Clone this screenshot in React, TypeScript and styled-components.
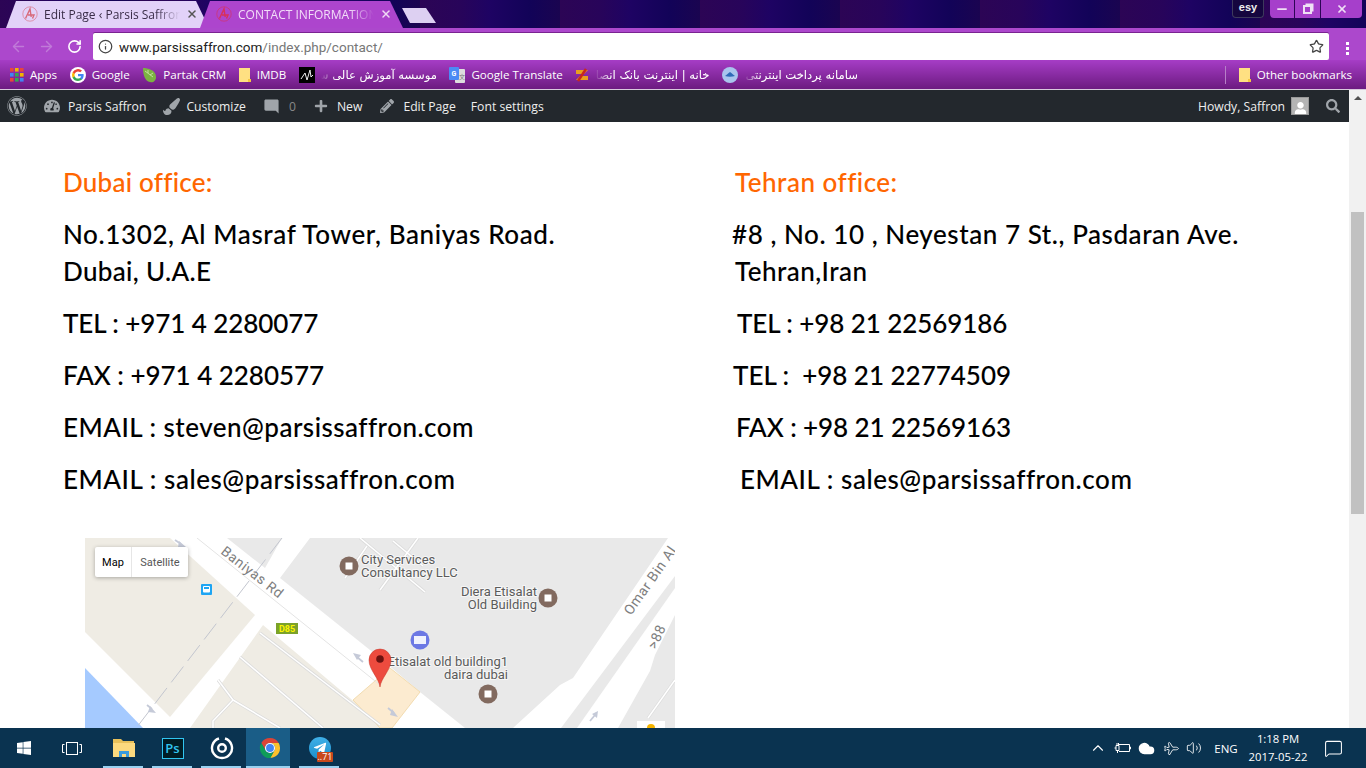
import React from "react";
import styled, { createGlobalStyle } from "styled-components";
import { FaWordpress, FaTachometerAlt, FaPaintBrush, FaPlus, FaPencilAlt, FaSearch, FaWindows, FaTelegramPlane, FaUser } from "react-icons/fa";
import { MdModeComment } from "react-icons/md";
import { ArrowLeft, ArrowRight, RotateCw, Info, Star, X, Minus, ChevronUp, Plane, Volume2, MessageSquare, Cloud } from "lucide-react";

const Global = createGlobalStyle`
  html, body { margin: 0; padding: 0; overflow: hidden; background: #fff; }
  * { box-sizing: border-box; }
`;

const Screen = styled.div`
  width: 1366px; height: 768px; display: flex; flex-direction: column; overflow: hidden;
  font-family: "Open Sans", "Liberation Sans", sans-serif;
`;
const TabStrip = styled.div`
  height: 28px; flex: none; display: flex; align-items: flex-end; padding-left: 6px;
  background: repeating-linear-gradient(90deg, #2c0555 0, #28045a 40px, #1e0363 70px, #120358 110px, #1a0450 140px);
`;
const Tab = styled.div<{ $active?: boolean }>`
  width: 203px; height: 28px; margin-right: -9px; padding: 0 11px 0 16px; display: flex; align-items: center; gap: 6px;
  clip-path: polygon(0 100%, 10px 1px, 190px 1px, 100% 100%);
  background: ${p => (p.$active ? "#ad45cd" : "#e2d2f8")};
  color: ${p => (p.$active ? "#f2dcf8" : "#3a2d48")};
  font-size: 12px;
`;
const TabTitle = styled.span`
  flex: 1; white-space: nowrap; overflow: hidden;
  -webkit-mask-image: linear-gradient(90deg, #000 82%, transparent);
`;
const NewTab = styled.div`
  width: 34px; height: 15px; margin: 0 0 5px 8px; background: #ddd0f2;
  clip-path: polygon(0 0, 24px 0, 100% 100%, 8px 100%);
`;
const Spacer = styled.div`flex: 1;`;
const Esy = styled.div`
  width: 32px; height: 18px; margin: 0 6px 10px 0; border: 1px solid #3d3a5c; border-top: 0; border-radius: 0 0 4px 4px;
  color: #eee; font: bold 11px "Liberation Sans", sans-serif; text-align: center; line-height: 15px; background: #15063f;
`;
const WinButtons = styled.div`
  display: flex; height: 18px; margin: 0 4px 10px 0; border-radius: 0 0 4px 4px; overflow: hidden; gap: 1px; background: #2c0555;
`;
const WinButton = styled.div<{ $w: number }>`
  width: ${p => p.$w}px; background: #a63fcb; color: #efe0f5; display: flex; align-items: center; justify-content: center;
`;
const RestoreGlyph = styled.div`
  width: 9px; height: 9px; border: 2px solid #efe0f5; box-shadow: 2px -2px 0 -0.5px #efe0f5;
`;
const Toolbar = styled.div`
  height: 32px; flex: none; padding: 5px 0 0 4px; display: flex; align-items: flex-start;
  background: #ac48cc;
`;
const NavIcon = styled.div<{ $on?: boolean }>`
  width: 28px; height: 27px; display: flex; align-items: center; justify-content: center;
  color: ${p => (p.$on ? "#fff" : "#c07ad8")};
`;
const Omnibox = styled.div`
  width: 1236px; height: 27px; margin-left: 5px; padding: 0 5px 0 5px; display: flex; align-items: center; gap: 6px;
  background: #fff; border-radius: 2px; box-shadow: 0 -1px 0 #7a2391; font: 13.500px "Roboto", sans-serif; color: #777;
`;
const UrlHost = styled.span`color: #222;`;
const Dots = styled.div`
  width: 3px; height: 3px; margin: 9px 0 0 17px; background: #fff; box-shadow: 0 5px #fff, 0 10px #fff;
`;
const Bookmarks = styled.div`
  height: 30px; flex: none; padding: 0 14px 0 10px; display: flex; align-items: center; gap: 12.600px;
  background: linear-gradient(#a63dc6, #6c1a80); border-bottom: 1px solid #d9c8de;
  color: #fff; font-size: 11.600px;
`;
const Mark = styled.div`display: flex; align-items: center; gap: 6px; white-space: nowrap;`;
const FadeText = styled.span<{ $w: number }>`
  width: ${p => p.$w}px; overflow: hidden; direction: rtl; font-family: "DejaVu Sans", sans-serif; font-size: 11.600px;
  -webkit-mask-image: linear-gradient(90deg, transparent, #000 16px);
`;
const Divider = styled.div`width: 1px; height: 18px; background: #b77fc8;`;
const Middle = styled.div`flex: 1; display: flex; min-height: 0;`;
const PageColumn = styled.div`flex: 1; display: flex; flex-direction: column; min-width: 0;`;
const AdminBar = styled.div`
  height: 32px; flex: none; padding: 0 9px 0 7px; display: flex; align-items: center; background: #23282d;
  color: #eee; font-size: 12.200px;
`;
const AdminItem = styled.div<{ $after?: number; $gap?: number }>`
  display: flex; align-items: center; gap: ${p => p.$gap ?? 8}px; margin-right: ${p => p.$after ?? 17}px; white-space: nowrap;
  svg { color: #a0a5aa; }
`;
const Muted = styled.span`color: #888; margin-left: 1px;`;
const Avatar = styled.div`
  width: 18px; height: 18px; background: #b4b4b4; border: 1px solid #999; margin: 0 17px 0 6px; display: flex; align-items: flex-end; justify-content: center; overflow: hidden;
  svg { color: #fff; margin-bottom: -1px; }
`;
const Content = styled.main`
  flex: 1; overflow: hidden; padding: 42px 0 0 63px; background: #fff;
`;
const Columns = styled.div`display: grid; grid-template-columns: 669px 1fr;`;
const Block = styled.div`margin: 0 0 15px;`;
const Line = styled.div<{ $indent?: number; $ls?: number; $orange?: boolean }>`
  margin-left: ${p => p.$indent ?? 0}px; font: 500 26px/37px "Lato", "Liberation Sans", sans-serif;
  letter-spacing: ${p => p.$ls ?? 0.42}px; color: ${p => (p.$orange ? "#ff6600" : "#000")}; white-space: pre;
  -webkit-text-stroke: 0.08px currentColor;
`;
const MapBox = styled.div`
  position: relative; width: 590px; height: 190px; margin: 25px 0 0 22px; overflow: hidden; background: #fff;
`;
const MapSvg = styled.svg`display: block;`;
const MapControl = styled.div`
  position: absolute; left: 10px; top: 9px; height: 30px; display: flex; background: #fff; border-radius: 2px;
  box-shadow: 0 1px 4px rgba(0,0,0,.3); font: 11px "Roboto", sans-serif; color: #565656;
`;
const MapTab = styled.div<{ $on?: boolean; $w: number }>`
  width: ${p => p.$w}px; display: flex; align-items: center; justify-content: center; color: ${p => (p.$on ? "#000" : "#565656")};
  border-right: ${p => (p.$on ? "1px solid #e6e6e6" : "none")};
`;
const Scrollbar = styled.div`
  width: 17px; flex: none; background: #f1f1f1; display: flex; flex-direction: column; align-items: center;
`;
const ScrollUp = styled.div`
  width: 0; height: 0; margin-top: 6px; border: 4px solid transparent; border-top: 0; border-bottom: 4px solid #505050;
`;
const ScrollThumb = styled.div`
  width: 13px; height: 302px; margin-top: 112px; background: #c1c1c1;
`;
const Taskbar = styled.footer`
  height: 40px; flex: none; display: flex; align-items: center; background: #0a3350; color: #fff;
`;
const Start = styled.div`width: 48px; display: flex; justify-content: center;`;
const TaskView = styled.div`width: 48px; display: flex; justify-content: center; margin-right: 3px;`;
const AppTile = styled.div<{ $active?: boolean }>`
  position: relative; width: ${p => (p.$active ? 44 : 49)}px; height: 40px; display: flex; align-items: center; justify-content: center;
  margin-right: ${p => (p.$active ? 5 : 0)}px; padding-left: ${p => (p.$active ? 4 : 0)}px;
  background: ${p => (p.$active ? "#1a5d87" : "transparent")};
  &::after { content: ""; position: absolute; left: ${p => (p.$active ? 0 : 4)}px; right: ${p => (p.$active ? 0 : 5)}px; bottom: 0; height: 2px; background: #99d1f0; }
`;
const PsIcon = styled.div`
  width: 22px; height: 21px; background: #001d26; border: 1px solid #31c5f0; color: #31c5f0;
  font: 600 13px/19px "Open Sans", sans-serif; text-align: center;
`;
const TgCircle = styled.div`
  width: 22px; height: 22px; border-radius: 50%; background: linear-gradient(#3fb0e8, #1d8fcb); display: flex; align-items: center; justify-content: center; color: #fff;
`;
const Badge = styled.span`
  position: absolute; left: 22px; top: 24px; width: 16px; height: 10px; background: #c8481b; color: #fff;
  font: 9px/10px "Open Sans", sans-serif; text-align: center; border-radius: 1px;
`;
const Tray = styled.div`
  margin-left: auto; display: flex; align-items: center; height: 100%; font-size: 11.300px;
`;
const TrayIcon = styled.div`width: 24px; display: flex; justify-content: center;`;
const TrayPlane = styled(TrayIcon)`svg { transform: rotate(45deg); }`;
const Lang = styled.div`width: 38px; margin-left: 1px; text-align: center; font-size: 11.500px;`;
const Clock = styled.div`width: 66px; text-align: center; line-height: 18px;`;
const Notify = styled.div`width: 44px; margin-right: 11px; display: flex; justify-content: center;`;

const FavIcon = ({ color }: { color: string }) => (
  <svg width="16" height="16" viewBox="0 0 16 16" fill="none" stroke={color} strokeWidth="1.4">
    <circle cx="8" cy="8" r="7.2" strokeWidth=".6" />
    <path d="M3.5 12.5 8 3l1.2 8M6 9h6l-1.5 3.5" />
  </svg>
);
const GoogleG = () => (
  <svg width="16" height="16" viewBox="0 0 24 24">
    <circle cx="12" cy="12" r="12" fill="#fff" />
    <path fill="#4285f4" d="M20.5 12.2c0-.6-.1-1.200-.2-1.700H12v3.300h4.800a4.100 4.100 0 0 1-1.800 2.700v2.200h2.900c1.700-1.600 2.600-3.800 2.600-6.500z" />
    <path fill="#34a853" d="M12 21c2.400 0 4.400-.8 5.900-2.200L15 16.500c-.8.500-1.800.9-3 .9-2.300 0-4.300-1.600-5-3.700H4v2.300A9 9 0 0 0 12 21z" />
    <path fill="#fbbc05" d="M7 13.700a5.400 5.400 0 0 1 0-3.400V8H4a9 9 0 0 0 0 8z" />
    <path fill="#ea4335" d="M12 6.600c1.300 0 2.500.5 3.400 1.300L18 5.400A9 9 0 0 0 4 8l3 2.300c.7-2.100 2.700-3.700 5-3.700z" />
  </svg>
);
const AppsGrid = () => (
  <svg width="14" height="14" viewBox="0 0 14 14">
    {["#e8453c","#f4b400","#e8453c","#4285f4","#34a853","#f4b400","#e8453c","#34a853","#4285f4"].map((c, i) => (
      <rect key={i} x={(i % 3) * 5} y={Math.floor(i / 3) * 5} width="3.600" height="3.600" fill={c} />
    ))}
  </svg>
);
const Leaf = () => (
  <svg width="15" height="16" viewBox="0 0 15 16">
    <path d="M1 1c5 0 13 2 13 9 0 4-3 6-6 5C3 14 1 8 1 1z" fill="#7cb342" />
    <path d="M3 4l8 6M6 6V3M8 8l3-2" stroke="#d5e8b5" strokeWidth=".8" fill="none" />
  </svg>
);
const Folder = () => (
  <svg width="12" height="14" viewBox="0 0 12 14">
    <path d="M0 0h11v11l1 0v3H0z" fill="#ffe082" />
    <path d="M9 11h3v3H9z" fill="#f5c542" />
  </svg>
);
const BlackMark = () => (
  <svg width="16" height="16" viewBox="0 0 16 16">
    <rect width="16" height="16" fill="#000" />
    <path d="M2 12 6 6l2 7 3-10 1 7 2-2" stroke="#eee" strokeWidth="1" fill="none" />
  </svg>
);
const Translate = () => (
  <svg width="16" height="16" viewBox="0 0 16 16">
    <rect x="6" y="2" width="10" height="14" rx="1" fill="#ddd" />
    <rect width="10" height="13" rx="1" fill="#4b8bf5" />
    <text x="2.500" y="9" fontSize="7" fontWeight="700" fill="#fff" fontFamily="Roboto, sans-serif">G</text>
    <text x="10" y="12" fontSize="6" fill="#777" fontFamily="Noto Sans CJK SC, sans-serif">文</text>
  </svg>
);
const BankMark = () => (
  <svg width="14" height="14" viewBox="0 0 14 14">
    <path d="M1 2h12L9 6H1z" fill="#e8a020" />
    <path d="M13 8H5l-4 4h12z" fill="#e8a020" />
    <path d="M3 13 11 1" stroke="#c8281e" strokeWidth="2.500" />
  </svg>
);
const Globe = () => (
  <svg width="16" height="16" viewBox="0 0 16 16">
    <circle cx="8" cy="8" r="8" fill="#a9c4ee" />
    <path d="M3 9c2-1 3-3 5-4 2 1 3 3 5 4-3 1-7 1-10 0z" fill="#2e6ab8" />
  </svg>
);
const ChromeLogo = () => (
  <svg width="22" height="22" viewBox="0 0 24 24">
    <path fill="#db4437" d="M12 1a11 11 0 0 0-9.500 5.500l4.300 7.400A5.500 5.500 0 0 1 12 6.500h9.500A11 11 0 0 0 12 1z" />
    <path fill="#fbc02d" d="M21.500 6.500H12a5.500 5.500 0 0 1 4.800 8.250L12.300 23A11 11 0 0 0 21.500 6.500z" />
    <path fill="#0f9d58" d="M2.500 6.500A11 11 0 0 0 12.300 23l4.500-8.250A5.500 5.500 0 0 1 6.800 13.900z" />
    <circle cx="12" cy="12" r="5.500" fill="#fff" />
    <circle cx="12" cy="12" r="4.300" fill="#4285f4" />
  </svg>
);
const Explorer = () => (
  <svg width="22" height="20" viewBox="0 0 22 20">
    <path d="M0 1h8l2 2h11v5H0z" fill="#e8c05a" />
    <path d="M0 5h22v14H0z" fill="#fcd97e" />
    <path d="M6 13h10v6h-3v-3H9v3H6z" fill="#3a9bdc" />
  </svg>
);
const RingApp = () => (
  <svg width="24" height="24" viewBox="0 0 24 24" fill="none" stroke="#fff">
    <path d="M15 2.500A10 10 0 1 1 9 2.500" strokeWidth="2.400" />
    <circle cx="12" cy="12" r="3.800" strokeWidth="2.400" />
  </svg>
);
const PlugBattery = () => (
  <svg width="17" height="12" viewBox="0 0 17 12" fill="none" stroke="#fff">
    <path d="M5 2.500h10.500v7H5M15.500 5h1v2h-1" />
    <path d="M.5 6h1.500M2 3.500h3v5H2zM3 1v2.500M4.500 1v2.500M3.500 8.500v2.500" />
  </svg>
);
const TaskViewGlyph = () => (
  <svg width="20" height="13" viewBox="0 0 20 13" fill="none" stroke="#fff">
    <rect x="4.500" y=".5" width="11" height="12" />
    <path d="M2.500 2.500H.5v8h2M17.500 2.500h2v8h-2" />
  </svg>
);

const Poi = ({ x, y }: { x: number; y: number }) => (
  <g>
    <circle cx={x} cy={y} r="9.500" fill="#826a5f" />
    <rect x={x - 3.500} y={y - 3.500} width="7" height="7" fill="#fff" />
  </g>
);
const MapArrow = ({ d, head }: { d: string; head: string }) => (
  <g>
    <path d={d} fill="none" stroke="#c5cad8" strokeWidth="1.800" />
    <path d={head} fill="#c5cad8" />
  </g>
);
const MapLabel = styled.text`
  font: 13px "Roboto", sans-serif; fill: #5b5b5b; stroke: #fff; stroke-width: 2px; paint-order: stroke; stroke-opacity: .6;
`;
const RoadLabel = styled.text`
  font: 14px "Roboto", sans-serif; fill: #7e7e7e; letter-spacing: .6px;
`;
const MinorRoad = ({ d }: { d: string }) => (
  <g fill="none">
    <path d={d} stroke="#dcdcdc" strokeWidth="3" />
    <path d={d} stroke="#fff" strokeWidth="1.500" />
  </g>
);

const MapDrawing = () => (
  <MapSvg width="590" height="190" viewBox="0 0 590 190">
    <rect width="590" height="190" fill="#fff" />
    <path d="M0 0h85l85 77-85 102L0 94z" fill="#efece4" />
    <path d="M178 87l107 90 10 13H105z" fill="#efece4" />
    <path d="M0 130l58 60H0z" fill="#a5caff" />
    <path d="M142 0h55l-17 30z" fill="#e9e9e9" />
    <path d="M225 0l-30 40 100 80 40 34 45 36h48l47-43 13-7 95-140z" fill="#e9e9e9" />
    <path d="M590 38v12L492 190h-16z" fill="#e9e9e9" />
    <path d="M590 77l-20 40-5 16-32 57h57z" fill="#e9e9e9" />
    <MinorRoad d="M590 142l-27 38" />
    <path d="M268 162l37-32 30 24-28 36h-12z" fill="#fcebd0" stroke="#f2dcb0" />
    <MinorRoad d="M175 95l120 92" />
    <MinorRoad d="M155 119l83 71" />
    <MinorRoad d="M133 142l15 20-20 21v7M148 162l47 28" />
    <MinorRoad d="M282 8l-22 32M308 3l30 25M333 0l-38 52M275 0l65 54" />
    <path d="M112 0l183 147" stroke="#e4e4e4" fill="none" />
    <path d="M197 0L52 189" stroke="#c3c6cf" strokeDasharray="20 7" fill="none" />
    <MapArrow d="M90 2l6 4" head="M94 3l7 6-8 0z" />
    <MapArrow d="M62 167l5 4" head="M65 168l6 7-8-1z" />
    <MapArrow d="M278 124l-6-5" head="M268 115l8 2-4 5z" />
    <MapArrow d="M303 170l6 5" head="M307 171l6 8-8-2z" />
    <MapArrow d="M505 183l5-6" head="M507 176l6-3-1 7z" />
    <Poi x={264} y={28} />
    <Poi x={463} y={60} />
    <Poi x={403} y={156} />
    <circle cx="335" cy="102" r="9.500" fill="#6c78e4" />
    <rect x="329" y="98" width="12" height="8" fill="#fff" opacity=".9" />
    <rect x="116" y="46" width="11" height="11" rx="1" fill="#1ea5f3" />
    <rect x="118" y="48" width="7" height="6.500" rx="1" fill="#fff" />
    <rect x="119" y="49" width="5" height="2" fill="#1ea5f3" />
    <rect x="191" y="85" width="22" height="11" fill="#7ca22a" />
    <text x="202" y="94" textAnchor="middle" fontSize="9" fontWeight="700" fill="#fdf500" fontFamily="Roboto, sans-serif">D85</text>
    <RoadLabel transform="translate(135 15) rotate(38)" fontSize="14.500">Baniyas Rd</RoadLabel>
    <RoadLabel transform="translate(546 78) rotate(-55)">Omar Bin Al</RoadLabel>
    <RoadLabel transform="translate(571 112) rotate(-66)">&gt;88</RoadLabel>
    <MapLabel x="276" y="26">City Services</MapLabel>
    <MapLabel x="276" y="39">Consultancy LLC</MapLabel>
    <MapLabel x="452" y="58" textAnchor="end">Diera Etisalat</MapLabel>
    <MapLabel x="452" y="71" textAnchor="end">Old Building</MapLabel>
    <MapLabel x="423" y="128" textAnchor="end">Etisalat old building1</MapLabel>
    <MapLabel x="423" y="141" textAnchor="end">daira dubai</MapLabel>
    <path d="M295 149c-1-9-11-17-11-27a11 11 0 0 1 22 0c0 10-10 18-11 27z" fill="#ed4b3e" stroke="#c5362a" strokeWidth=".5" />
    <circle cx="295" cy="121" r="3.800" fill="#6b1210" />
    <rect x="552" y="183" width="28" height="7" fill="#fff" />
    <circle cx="566" cy="190" r="4" fill="#f5b400" />
  </MapSvg>
);

export default function App() {
  return (
    <Screen>
      <Global />
      <TabStrip>
        <Tab>
          <FavIcon color="#d86a7a" />
          <TabTitle>Edit Page ‹ Parsis Saffron</TabTitle>
          <X size={12} strokeWidth={3} color="#555" />
        </Tab>
        <Tab $active>
          <FavIcon color="#d8305a" />
          <TabTitle>CONTACT INFORMATION</TabTitle>
          <X size={12} strokeWidth={3} color="#f0d8f5" />
        </Tab>
        <NewTab />
        <Spacer />
        <Esy>esy</Esy>
        <WinButtons>
          <WinButton $w={24}><Minus size={14} strokeWidth={3} /></WinButton>
          <WinButton $w={25}><RestoreGlyph /></WinButton>
          <WinButton $w={41}><X size={12} strokeWidth={3.500} /></WinButton>
        </WinButtons>
      </TabStrip>
      <Toolbar>
        <NavIcon><ArrowLeft size={17} /></NavIcon>
        <NavIcon><ArrowRight size={17} /></NavIcon>
        <NavIcon $on><RotateCw size={15} strokeWidth={2.500} /></NavIcon>
        <Omnibox>
          <Info size={15} color="#444" />
          <span><UrlHost>www.parsissaffron.com</UrlHost>/index.php/contact/</span>
          <Spacer />
          <Star size={15} color="#444" />
        </Omnibox>
        <Dots />
      </Toolbar>
      <Bookmarks>
        <Mark><AppsGrid />Apps</Mark>
        <Mark><GoogleG />Google</Mark>
        <Mark><Leaf />Partak CRM</Mark>
        <Mark><Folder />IMDB</Mark>
        <Mark><BlackMark /><FadeText $w={116}>موسسه آموزش عالی س</FadeText></Mark>
        <Mark><Translate />Google Translate</Mark>
        <Mark><BankMark /><FadeText $w={114}>خانه | اینترنت بانک انصا</FadeText></Mark>
        <Mark><Globe /><FadeText $w={114}>سامانه پرداخت اینترنتی</FadeText></Mark>
        <Spacer />
        <Divider />
        <Mark><Folder />Other bookmarks</Mark>
      </Bookmarks>
      <Middle>
        <PageColumn>
          <AdminBar>
            <AdminItem><FaWordpress size={20} /></AdminItem>
            <AdminItem><FaTachometerAlt size={16} />Parsis Saffron</AdminItem>
            <AdminItem $gap={6}><FaPaintBrush size={17} />Customize</AdminItem>
            <AdminItem $after={18}><MdModeComment size={17} /><Muted>0</Muted></AdminItem>
            <AdminItem $after={18} $gap={9}><FaPlus size={14} />New</AdminItem>
            <AdminItem $after={15} $gap={9}><FaPencilAlt size={14} />Edit Page</AdminItem>
            <AdminItem>Font settings</AdminItem>
            <Spacer />
            <AdminItem $after={0}>Howdy, Saffron</AdminItem>
            <Avatar><FaUser size={13} /></Avatar>
            <AdminItem $after={0}><FaSearch size={14} /></AdminItem>
          </AdminBar>
          <Content>
            <Columns>
              <div>
                <Block><Line $orange $ls={0.25}>Dubai office:</Line></Block>
                <Block>
                  <Line $ls={0.62}>No.1302, Al Masraf Tower, Baniyas Road.</Line>
                  <Line $ls={0.35}>Dubai, U.A.E</Line>
                </Block>
                <Block><Line $ls={-0.08}>TEL : +971 4 2280077</Line></Block>
                <Block><Line $ls={-0.03}>FAX : +971 4 2280577</Line></Block>
                <Block><Line $ls={0.49}>EMAIL : steven@parsissaffron.com</Line></Block>
                <Block><Line $ls={0.55}>EMAIL : sales@parsissaffron.com</Line></Block>
              </div>
              <div>
                <Block><Line $orange $indent={3} $ls={0.5}>Tehran office:</Line></Block>
                <Block>
                  <Line $ls={0.56}>#8 , No. 10 , Neyestan 7 St., Pasdaran Ave.</Line>
                  <Line $indent={3} $ls={0.45}>Tehran,Iran</Line>
                </Block>
                <Block><Line $indent={5} $ls={-0.08}>TEL : +98 21 22569186</Line></Block>
                <Block><Line $indent={1} $ls={-0.02}>TEL :  +98 21 22774509</Line></Block>
                <Block><Line $indent={4} $ls={-0.08}>FAX : +98 21 22569163</Line></Block>
                <Block><Line $indent={8} $ls={0.55}>EMAIL : sales@parsissaffron.com</Line></Block>
              </div>
            </Columns>
            <MapBox>
              <MapDrawing />
              <MapControl>
                <MapTab $on $w={37}>Map</MapTab>
                <MapTab $w={56}>Satellite</MapTab>
              </MapControl>
            </MapBox>
          </Content>
        </PageColumn>
        <Scrollbar>
          <ScrollUp />
          <ScrollThumb />
        </Scrollbar>
      </Middle>
      <Taskbar>
        <Start><FaWindows size={16} /></Start>
        <TaskView><TaskViewGlyph /></TaskView>
        <AppTile><Explorer /></AppTile>
        <AppTile><PsIcon>Ps</PsIcon></AppTile>
        <AppTile><RingApp /></AppTile>
        <AppTile $active><ChromeLogo /></AppTile>
        <AppTile><TgCircle><FaTelegramPlane size={14} /></TgCircle><Badge>..71</Badge></AppTile>
        <Tray>
          <TrayIcon><ChevronUp size={18} strokeWidth={1.500} /></TrayIcon>
          <TrayIcon><PlugBattery /></TrayIcon>
          <TrayIcon><Cloud size={17} fill="#fff" /></TrayIcon>
          <TrayPlane><Plane size={15} strokeWidth={1.300} /></TrayPlane>
          <TrayIcon><Volume2 size={16} strokeWidth={1.300} /></TrayIcon>
          <Lang>ENG</Lang>
          <Clock>1:18 PM<br />2017-05-22</Clock>
          <Notify><MessageSquare size={19} strokeWidth={1.300} /></Notify>
        </Tray>
      </Taskbar>
    </Screen>
  );
}
